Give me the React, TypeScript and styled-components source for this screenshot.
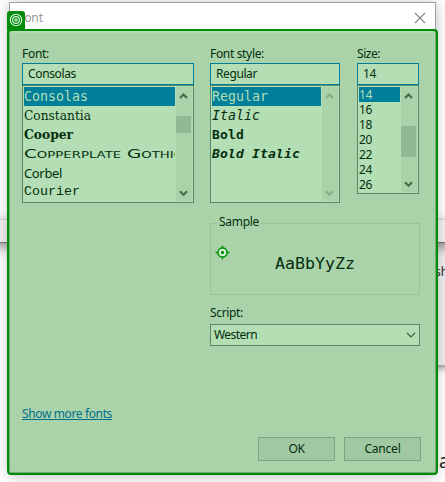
import React, { useLayoutEffect, useRef, useState } from "react";
import styled, { createGlobalStyle } from "styled-components";

const ui = '"Noto Sans", "Open Sans", sans-serif';
const mono = '"DejaVu Sans Mono", monospace';
const c = {
  face: "#aad3aa",
  field: "#b4deb4",
  line: "#5a8768",
  accent: "#007f9b",
  frame: "#008c0a",
  thumb: "#91ba94",
  ink: "#052e10",
};

const GlobalStyle = createGlobalStyle`
  * { box-sizing: border-box; }
  body { margin: 0; background: #fff; overflow: hidden; }
`;

const Desktop = styled.main`
  position: relative;
  width: 445px;
  height: 482px;
  overflow: hidden;
  background: #fff;
  font: 12px/16px ${ui};
  color: ${c.ink};
`;

const BackStrip = styled.div`
  position: absolute;
  left: -10px;
  right: -10px;
  top: 219px;
  height: 24px;
  background: #f0f0f0;
  border-top: 1px solid #d5d5d5;
  border-bottom: 1px solid #777;
  box-shadow: 0 4px 12px rgba(0, 0, 0, 0.42);
`;

const BackPanel = styled.div`
  position: absolute;
  left: 400px;
  right: -10px;
  top: 243px;
  height: 122px;
  background: #f0eff0;
  box-shadow: 0 2px 7px rgba(0, 0, 0, 0.5);
`;

const BackText = styled.span<{ $x: number; $y: number; $size: number }>`
  position: absolute;
  left: ${(p) => p.$x}px;
  top: ${(p) => p.$y}px;
  font-size: ${(p) => p.$size}px;
  line-height: 1;
  color: #222;
`;

const Dialog = styled.section`
  position: absolute;
  left: 9px;
  top: 2px;
  width: 427px;
  height: 472px;
  border: 1px solid #a0a0a0;
  background: #fff;
  box-shadow: 0 2px 13px rgba(0, 0, 0, 0.28);
`;

const TitleBar = styled.header`
  display: flex;
  align-items: center;
  justify-content: space-between;
  height: 29px;
  padding: 0 9px 0 8px;
  color: #999;
`;

const Overlay = styled.section`
  position: absolute;
  left: 7px;
  top: 29px;
  width: 431px;
  height: 446px;
  border: 2px solid ${c.frame};
  border-radius: 4px;
  background: ${c.face};
  box-shadow: inset 1px 0 #77aa7b, inset -1px 0 #77aa7b, inset 0 -1px #77aa7b, inset 0 2px #b3dcb3;
  padding: 15px 16px 12px 13px;
  display: flex;
  flex-direction: column;
`;

const Badge = styled.div`
  position: absolute;
  left: 7px;
  top: 11px;
  width: 18px;
  height: 20px;
  border-radius: 3px 3px 0 0;
  background: ${c.frame};
  svg { display: block; }
`;

const Columns = styled.div`
  display: grid;
  grid-template-columns: 172px 130px 63px;
  column-gap: 16px;
  height: 157px;
  align-items: start;
  & > :last-child { margin-left: 1px; }
`;

const Column = styled.div`
  display: flex;
  flex-direction: column;
`;

const Label = styled.label`
  height: 17px;
  line-height: 15px;
  white-space: nowrap;
`;

const Field = styled.div`
  height: 22px;
  border: 1px solid ${c.accent};
  background: ${c.field};
  padding-left: 5px;
  line-height: 19px;
`;

const List = styled.div<{ $h: number }>`
  display: flex;
  height: ${(p) => p.$h}px;
  border: 1px solid ${c.line};
  background: ${c.field};
  padding: 1px;
`;

const Rows = styled.div`
  flex: 1;
  min-width: 0;
  margin-right: 1px;
  overflow: hidden;
`;

const Row = styled.div<{ $h: number; $on?: boolean; $face?: string; $size?: number; $weight?: number; $italic?: boolean; $caps?: boolean }>`
  height: ${(p) => p.$h}px;
  line-height: ${(p) => p.$h}px;
  overflow: hidden;
  white-space: nowrap;
  background: ${(p) => (p.$on ? c.accent : "transparent")};
  color: ${(p) => (p.$on ? "#b4deb4" : c.ink)};
  font-family: ${(p) => p.$face ?? ui};
  font-size: ${(p) => p.$size ?? 12}px;
  font-weight: ${(p) => p.$weight ?? 400};
  font-style: ${(p) => (p.$italic ? "italic" : "normal")};
  font-variant-caps: ${(p) => (p.$caps ? "small-caps" : "normal")};
`;

const Track = styled.div<{ $faded?: boolean }>`
  width: 16px;
  background: ${c.face};
  display: flex;
  flex-direction: column;
  color: ${(p) => (p.$faded ? "#83ae86" : "#42704a")};
`;

const Thumb = styled.div<{ $gap: number; $h: number }>`
  width: 15px;
  height: ${(p) => p.$h}px;
  margin-top: ${(p) => p.$gap}px;
  background: ${c.thumb};
`;

const ArrowBox = styled.div<{ $bottom?: boolean }>`
  width: 15px;
  height: 17px;
  margin-top: ${(p) => (p.$bottom ? "auto" : 0)};
  svg { display: block; }
`;

const Lower = styled.div`
  width: 210px;
  margin-left: 188px;
  margin-top: 12px;
  display: flex;
  flex-direction: column;
`;

const Sample = styled.fieldset`
  position: relative;
  margin: 0;
  padding: 0;
  height: 80px;
  border: 1px solid #98c39b;
  min-width: 0;
`;

const Legend = styled.legend`
  margin-left: 6px;
  padding: 0 2px;
  height: 16px;
  line-height: 14px;
`;

const Preview = styled.div`
  height: 62px;
  padding-left: 64px;
  font: 16.6px/66px ${mono};
`;

const Target = styled.svg`
  position: absolute;
  left: 4px;
  top: 14px;
`;

const Combo = styled.div`
  height: 22px;
  display: flex;
  align-items: center;
  justify-content: space-between;
  border: 1px solid ${c.line};
  background: ${c.field};
  padding: 0 3px;
  line-height: 20px;
`;

const ScriptLabel = styled(Label)`
  margin-top: 10px;
  height: 19px;
`;

const Link = styled.a`
  align-self: flex-start;
  margin-top: 60px;
  height: 16px;
  color: #00708c;
  text-decoration: underline;
  text-underline-offset: 1px;
`;

const Actions = styled.footer`
  margin-top: auto;
  display: flex;
  justify-content: flex-end;
  gap: 9px;
  margin-right: -1px;
`;

const Button = styled.button`
  width: 77px;
  height: 24px;
  padding: 0;
  border: 1px solid #7aa680;
  background: #a0c9a2;
  font: 12px/22px ${ui};
  color: ${c.ink};
`;

const FitSpan = styled.span`
  display: inline-block;
  vertical-align: top;
  white-space: pre;
  text-decoration: inherit;
  text-underline-offset: inherit;
  transform-origin: 0 50%;
`;

/** Fills the given width with its text, by tracking or by widening the glyphs. */
function Fit({ w, stretch, children }: { w: number; stretch?: boolean; children: string }) {
  const ref = useRef<HTMLSpanElement>(null);
  const [natural, setNatural] = useState(w);
  useLayoutEffect(() => {
    setNatural(ref.current!.offsetWidth ? ref.current!.getBoundingClientRect().width : w);
  }, [w, children]);
  const style = stretch
    ? { transform: `scaleX(${w / natural})` }
    : { letterSpacing: (w - natural) / children.length };
  return <FitSpan ref={ref} style={style}>{children}</FitSpan>;
}

function Arrow({ down }: { down?: boolean }) {
  return (
    <ArrowBox $bottom={down}>
      <svg width="15" height="17" viewBox="0 0 15 17" fill="none" stroke="currentColor" strokeWidth="2.2">
        <path d={down ? "M4 7.3l3.5 3.5L11 7.3" : "M4 11l3.5-3.5L11 11"} />
      </svg>
    </ArrowBox>
  );
}

function Scrollbar({ gap, h, faded }: { gap?: number; h?: number; faded?: boolean }) {
  return (
    <Track $faded={faded}>
      <Arrow />
      {h ? <Thumb $gap={gap ?? 0} $h={h} /> : null}
      <Arrow down />
    </Track>
  );
}

export default function App() {
  return (
    <Desktop>
      <GlobalStyle />
      <BackPanel />
      <BackStrip />
      <Dialog>
        <TitleBar>
          <Fit w={25}>Font</Fit>
          <svg width="12" height="12" viewBox="0 0 12 12" stroke="#888" strokeWidth="1.1">
            <path d="M1 1l10 10M11 1L1 11" />
          </svg>
        </TitleBar>
      </Dialog>
      <BackText $x={435} $y={266} $size={12}>sh</BackText>
      <BackText $x={439} $y={452} $size={19}>a</BackText>
      <Overlay>
        <Columns>
          <Column>
            <Label><Fit w={27}>Font:</Fit></Label>
            <Field><Fit w={48}>Consolas</Fit></Field>
            <List $h={118}>
              <Rows>
                <Row $h={19} $on $face={mono} $size={13.3}><Fit w={64}>Consolas</Fit></Row>
                <Row $h={20} $face='"DejaVu Serif", serif' $size={13}><Fit w={67} stretch>Constantia</Fit></Row>
                <Row $h={18} $face='"DejaVu Serif", serif' $size={13} $weight={900}><Fit w={49} stretch>Cooper</Fit></Row>
                <Row $h={20} $face='"DejaVu Sans", sans-serif' $size={12.5} $caps><Fit w={159} stretch>Copperplate Gothic</Fit></Row>
                <Row $h={18} $size={13}><Fit w={38}>Corbel</Fit></Row>
                <Row $h={19} $face='"Liberation Mono", monospace' $size={13.3}><Fit w={56}>Courier</Fit></Row>
              </Rows>
              <Scrollbar gap={12} h={17} />
            </List>
          </Column>
          <Column>
            <Label><Fit w={54}>Font style:</Fit></Label>
            <Field><Fit w={41}>Regular</Fit></Field>
            <List $h={118}>
              <Rows>
                <Row $h={19} $on $face={mono} $size={13.3}><Fit w={56}>Regular</Fit></Row>
                <Row $h={19} $face={mono} $size={13.3} $italic><Fit w={48}>Italic</Fit></Row>
                <Row $h={19} $face={mono} $size={13} $weight={700}><Fit w={32}>Bold</Fit></Row>
                <Row $h={19} $face={mono} $size={13} $weight={700} $italic><Fit w={88}>Bold Italic</Fit></Row>
              </Rows>
              <Scrollbar faded />
            </List>
          </Column>
          <Column>
            <Label><Fit w={23}>Size:</Fit></Label>
            <Field><Fit w={13}>14</Fit></Field>
            <List $h={109}>
              <Rows>
                {["14", "16", "18", "20", "22", "24", "26"].map((n, i) => (
                  <Row key={n} $h={15} $on={i === 0}>
                    <Fit w={13}>{n}</Fit>
                  </Row>
                ))}
              </Rows>
              <Scrollbar gap={22} h={31} />
            </List>
          </Column>
        </Columns>
        <Lower>
          <Sample>
            <Legend><Fit w={40}>Sample</Fit></Legend>
            <Preview><Fit w={80}>AaBbYyZz</Fit></Preview>
            <Target width="15" height="15" viewBox="0 0 15 15" fill="none">
              <circle cx="7.5" cy="7.5" r="4.6" fill="#d8f0d8" stroke="#0b930f" strokeWidth="1.6" />
              <circle cx="7.5" cy="7.5" r="1.7" fill="#0b930f" />
              <path d="M7.5 .5v3M7.5 11.5v3M.5 7.5h3M11.5 7.5h3" stroke="#0b930f" strokeWidth="1.4" />
            </Target>
          </Sample>
          <ScriptLabel><Fit w={33}>Script:</Fit></ScriptLabel>
          <Combo>
            <Fit w={43}>Western</Fit>
            <svg width="10" height="6" viewBox="0 0 10 6" fill="none" stroke="#315f3b" strokeWidth="1.2">
              <path d="M1 .8l4 4 4-4" />
            </svg>
          </Combo>
        </Lower>
        <Link><Fit w={90}>Show more fonts</Fit></Link>
        <Actions>
          <Button><Fit w={16}>OK</Fit></Button>
          <Button><Fit w={36}>Cancel</Fit></Button>
        </Actions>
      </Overlay>
      <Badge>
        <svg width="18" height="18" viewBox="0 0 18 18" fill="none" stroke="#d9f2d9" strokeWidth="1.1">
          <circle cx="9" cy="9" r="5.7" />
          <circle cx="9" cy="9" r="3.4" />
          <circle cx="9" cy="9" r="1.2" />
        </svg>
      </Badge>
    </Desktop>
  );
}
